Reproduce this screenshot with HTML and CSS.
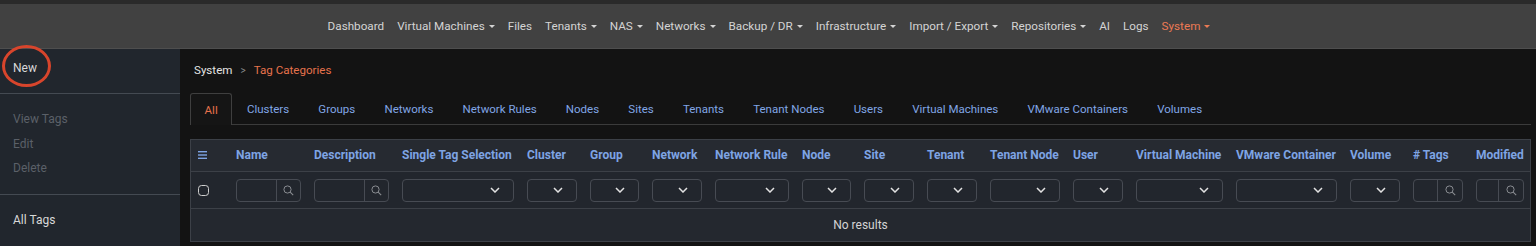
FILE: index.html
```html
<!DOCTYPE html>
<html>
<head>
<meta charset="utf-8">
<link rel="stylesheet" href="styles.css">
</head>
<body>
<div class="topstrip"></div>
<nav class="navbar">
  <a class="nav-item">Dashboard</a>
  <a class="nav-item dd">Virtual Machines</a>
  <a class="nav-item">Files</a>
  <a class="nav-item dd">Tenants</a>
  <a class="nav-item dd">NAS</a>
  <a class="nav-item dd">Networks</a>
  <a class="nav-item dd">Backup / DR</a>
  <a class="nav-item dd">Infrastructure</a>
  <a class="nav-item dd">Import / Export</a>
  <a class="nav-item dd">Repositories</a>
  <a class="nav-item">AI</a>
  <a class="nav-item">Logs</a>
  <a class="nav-item dd active">System</a>
</nav>
<div class="layout">
  <aside class="sidebar">
    <div class="side-section s1">
      <div class="side-item">New</div>
      <div class="highlight-ring"></div>
    </div>
    <div class="side-section s2">
      <div class="side-item disabled">View Tags</div>
      <div class="side-item disabled">Edit</div>
      <div class="side-item disabled">Delete</div>
    </div>
    <div class="side-section s3">
      <div class="side-item">All Tags</div>
    </div>
  </aside>
  <main class="main">
    <div class="breadcrumb">
      <span class="bc-root">System</span>
      <span class="bc-sep">&gt;</span>
      <span class="bc-current">Tag Categories</span>
    </div>
    <div class="tabs">
      <div class="tab active">All</div>
      <div class="tab">Clusters</div>
      <div class="tab">Groups</div>
      <div class="tab">Networks</div>
      <div class="tab">Network Rules</div>
      <div class="tab">Nodes</div>
      <div class="tab">Sites</div>
      <div class="tab">Tenants</div>
      <div class="tab">Tenant Nodes</div>
      <div class="tab">Users</div>
      <div class="tab">Virtual Machines</div>
      <div class="tab">VMware Containers</div>
      <div class="tab">Volumes</div>
    </div>
    <div class="grid-table">
      <div class="row head">
        <div class="cell menu-cell">
          <svg width="9" height="8" viewBox="0 0 9 8"><rect x="0" y="0" width="9" height="1.4" fill="#7ea4e4"/><rect x="0" y="3.3" width="9" height="1.4" fill="#7ea4e4"/><rect x="0" y="6.6" width="9" height="1.4" fill="#7ea4e4"/></svg>
        </div>
        <div class="cell">Name</div>
        <div class="cell">Description</div>
        <div class="cell">Single Tag Selection</div>
        <div class="cell">Cluster</div>
        <div class="cell">Group</div>
        <div class="cell">Network</div>
        <div class="cell">Network Rule</div>
        <div class="cell">Node</div>
        <div class="cell">Site</div>
        <div class="cell">Tenant</div>
        <div class="cell">Tenant Node</div>
        <div class="cell">User</div>
        <div class="cell">Virtual Machine</div>
        <div class="cell">VMware Container</div>
        <div class="cell">Volume</div>
        <div class="cell"># Tags</div>
        <div class="cell">Modified</div>
      </div>
      <div class="row filters">
        <div class="cell menu-cell"><span class="checkbox"></span></div>
        <div class="cell"><div class="search"><span class="field"></span><span class="addon"><svg width="11" height="11" viewBox="0 0 11 11"><circle cx="4.5" cy="4.5" r="3.6" fill="none" stroke="#8a8d92" stroke-width="1"/><line x1="7.2" y1="7.2" x2="10.2" y2="10.2" stroke="#8a8d92" stroke-width="1.1"/></svg></span></div></div>
        <div class="cell"><div class="search"><span class="field"></span><span class="addon"><svg width="11" height="11" viewBox="0 0 11 11"><circle cx="4.5" cy="4.5" r="3.6" fill="none" stroke="#8a8d92" stroke-width="1"/><line x1="7.2" y1="7.2" x2="10.2" y2="10.2" stroke="#8a8d92" stroke-width="1.1"/></svg></span></div></div>
        <div class="cell"><div class="select"><svg width="10" height="6" viewBox="0 0 10 6"><polyline points="1,1 5,5 9,1" fill="none" stroke="#e2e2e2" stroke-width="1.5"/></svg></div></div>
        <div class="cell"><div class="select"><svg width="10" height="6" viewBox="0 0 10 6"><polyline points="1,1 5,5 9,1" fill="none" stroke="#e2e2e2" stroke-width="1.5"/></svg></div></div>
        <div class="cell"><div class="select"><svg width="10" height="6" viewBox="0 0 10 6"><polyline points="1,1 5,5 9,1" fill="none" stroke="#e2e2e2" stroke-width="1.5"/></svg></div></div>
        <div class="cell"><div class="select"><svg width="10" height="6" viewBox="0 0 10 6"><polyline points="1,1 5,5 9,1" fill="none" stroke="#e2e2e2" stroke-width="1.5"/></svg></div></div>
        <div class="cell"><div class="select"><svg width="10" height="6" viewBox="0 0 10 6"><polyline points="1,1 5,5 9,1" fill="none" stroke="#e2e2e2" stroke-width="1.5"/></svg></div></div>
        <div class="cell"><div class="select"><svg width="10" height="6" viewBox="0 0 10 6"><polyline points="1,1 5,5 9,1" fill="none" stroke="#e2e2e2" stroke-width="1.5"/></svg></div></div>
        <div class="cell"><div class="select"><svg width="10" height="6" viewBox="0 0 10 6"><polyline points="1,1 5,5 9,1" fill="none" stroke="#e2e2e2" stroke-width="1.5"/></svg></div></div>
        <div class="cell"><div class="select"><svg width="10" height="6" viewBox="0 0 10 6"><polyline points="1,1 5,5 9,1" fill="none" stroke="#e2e2e2" stroke-width="1.5"/></svg></div></div>
        <div class="cell"><div class="select"><svg width="10" height="6" viewBox="0 0 10 6"><polyline points="1,1 5,5 9,1" fill="none" stroke="#e2e2e2" stroke-width="1.5"/></svg></div></div>
        <div class="cell"><div class="select"><svg width="10" height="6" viewBox="0 0 10 6"><polyline points="1,1 5,5 9,1" fill="none" stroke="#e2e2e2" stroke-width="1.5"/></svg></div></div>
        <div class="cell"><div class="select"><svg width="10" height="6" viewBox="0 0 10 6"><polyline points="1,1 5,5 9,1" fill="none" stroke="#e2e2e2" stroke-width="1.5"/></svg></div></div>
        <div class="cell"><div class="select"><svg width="10" height="6" viewBox="0 0 10 6"><polyline points="1,1 5,5 9,1" fill="none" stroke="#e2e2e2" stroke-width="1.5"/></svg></div></div>
        <div class="cell"><div class="select"><svg width="10" height="6" viewBox="0 0 10 6"><polyline points="1,1 5,5 9,1" fill="none" stroke="#e2e2e2" stroke-width="1.5"/></svg></div></div>
        <div class="cell"><div class="search small"><span class="field"></span><span class="addon"><svg width="11" height="11" viewBox="0 0 11 11"><circle cx="4.5" cy="4.5" r="3.6" fill="none" stroke="#8a8d92" stroke-width="1"/><line x1="7.2" y1="7.2" x2="10.2" y2="10.2" stroke="#8a8d92" stroke-width="1.1"/></svg></span></div></div>
        <div class="cell last"><div class="search small"><span class="field"></span><span class="addon"><svg width="11" height="11" viewBox="0 0 11 11"><circle cx="4.5" cy="4.5" r="3.6" fill="none" stroke="#8a8d92" stroke-width="1"/><line x1="7.2" y1="7.2" x2="10.2" y2="10.2" stroke="#8a8d92" stroke-width="1.1"/></svg></span></div></div>
      </div>
      <div class="empty">No results</div>
    </div>
  </main>
</div>
</body>
</html>
```

FILE: styles.css
```css
* { box-sizing: border-box; }
html, body { margin: 0; padding: 0; }
body {
  width: 1536px;
  height: 246px;
  overflow: hidden;
  background: #131313;
  font-family: Roboto, "Liberation Sans", sans-serif;
  font-size: 12px;
  color: #d6d6d6;
}
.topstrip { height: 4px; background: #2a2a2a; }
.navbar {
  height: 45px;
  background: #414141;
  border-bottom: 1px solid #4e4e4e;
  display: flex;
  justify-content: center;
  align-items: center;
  padding-left: 2px;
}
.nav-item {
  color: #d4d4d4;
  padding: 0 6.5px;
  font-size: 11.7px;
  display: flex;
  align-items: center;
}
.nav-item.dd::after {
  content: "";
  margin-left: 4px;
  border-left: 3.5px solid transparent;
  border-right: 3.5px solid transparent;
  border-top: 3.5px solid currentColor;
}
.nav-item.active { color: #ec7a54; }

.layout { display: flex; height: 197px; }
.sidebar {
  width: 180px;
  flex: none;
  background: #21262d;
  font-size: 12px;
}
.side-section { padding-left: 13px; border-bottom: 1px solid #444a52; }
.side-section.s1 { position: relative; padding-top: 7px; padding-bottom: 13px; }
.side-section.s2 { padding-top: 13px; padding-bottom: 13px; }
.side-section.s3 { border-bottom: none; padding-top: 13px; }
.side-item { line-height: 24px; color: #d8d8d8; }
.side-section.s2 .side-item { line-height: 24.5px; }
.side-item.disabled { color: #5b6068; }
.highlight-ring {
  position: absolute;
  left: 2px;
  top: -4px;
  width: 49px;
  height: 42px;
  border: 3px solid #d8452c;
  border-radius: 50%;
}

.main { flex: 1; padding: 0 5px 0 10px; }
.breadcrumb {
  height: 44px;
  display: flex;
  align-items: center;
  padding-left: 4px;
  padding-bottom: 2px;
  font-size: 11.6px;
}
.bc-root { color: #e4e4e4; }
.bc-sep { color: #8a8a8a; margin: 0 8px; font-size: 10px; }
.bc-current { color: #e6724c; }

.tabs {
  display: flex;
  height: 32px;
  border-bottom: 1px solid #3b3b3b;
}
.tab {
  padding: 0 13.6px;
  display: flex;
  align-items: center;
  color: #81a6e6;
  font-size: 11.5px;
  border: 1px solid transparent;
  border-bottom: none;
  border-radius: 3px 3px 0 0;
}
.tab.active {
  color: #e6724c;
  border-color: #3f3f3f;
  background: #151515;
  margin-bottom: -1px;
}

.grid-table {
  margin-top: 14px;
  border: 1px solid #3c4047;
  width: 1341px;
  background: #23272e;
}
.row {
  display: grid;
  grid-template-columns: 45px 78px 88px 125px 63px 62px 63px 87px 62px 63px 63px 83px 63px 100px 114px 63px 63px 1fr;
  align-items: center;
  border-bottom: 1px solid #3c4047;
}
.row.head {
  height: 32px;
  background: #262a31;
  color: #7ea4e4;
  font-weight: 700;
  font-size: 12px;
  padding-bottom: 1px;
}
.row.filters { height: 37px; background: #22262d; }
.cell { padding-right: 13px; white-space: nowrap; }
.cell.last { padding-right: 6px; }
.menu-cell { padding-left: 7px; display: flex; align-items: center; }
.checkbox {
  width: 11px;
  height: 11px;
  border: 1.5px solid #cfcfcf;
  border-radius: 3.5px;
}
.search, .select {
  height: 23px;
  border: 1px solid #474b53;
  border-radius: 4px;
  display: flex;
}
.search .field { flex: 1; }
.search .addon {
  width: 24px;
  border-left: 1px solid #474b53;
  display: flex;
  align-items: center;
  justify-content: center;
}
.search.small .addon { width: 25px; }
.select { justify-content: flex-end; align-items: center; padding-right: 13px; }
.empty {
  height: 32px;
  display: flex;
  align-items: center;
  justify-content: center;
  color: #d4d4d4;
  font-size: 12px;
  background: #24282f;
}
```
